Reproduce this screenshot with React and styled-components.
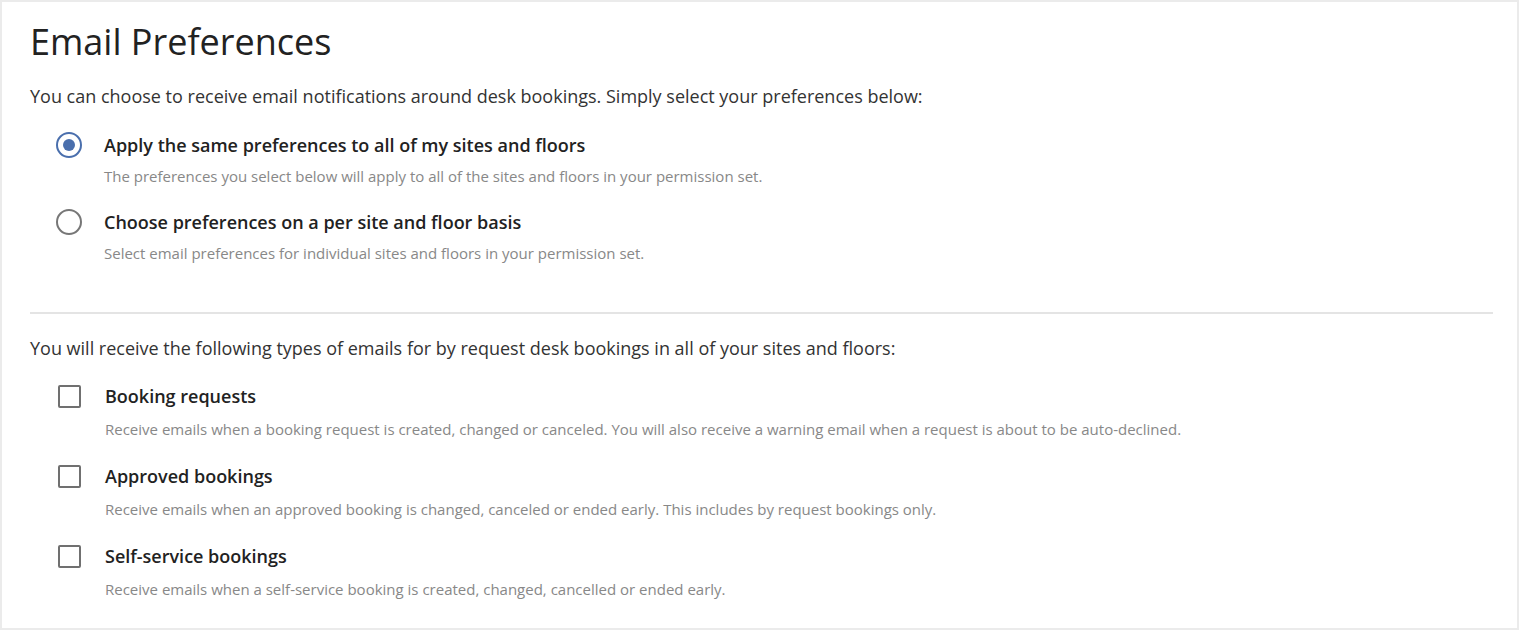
import React from "react";
import styled, { createGlobalStyle } from "styled-components";

const Global = createGlobalStyle`
  html, body { margin: 0; padding: 0; background: #ffffff; }
  body { font-family: "Open Sans", "Noto Sans", sans-serif; }
  * { box-sizing: border-box; }
`;

const Frame = styled.div`
  width: 1519px;
  height: 630px;
  border: 2px solid #ebebeb;
  background: #ffffff;
  padding: 15px 24px 0 28px;
  overflow: hidden;
`;

const Title = styled.h1`
  margin: 0;
  font-size: 36px;
  font-weight: 400;
  line-height: 50px;
  color: #222222;
`;

const Intro = styled.p`
  margin: ${(p) => p.$top || 0}px 0 0;
  font-size: 18px;
  line-height: 24px;
  color: #333333;
`;

const OptionList = styled.div`
  display: flex;
  flex-direction: column;
  gap: ${(p) => p.$gap}px;
  margin-top: ${(p) => p.$top}px;
`;

const Option = styled.label`
  display: grid;
  grid-template-columns: ${(p) => p.$col}px 1fr;
  grid-template-rows: auto auto;
  row-gap: ${(p) => p.$rowGap}px;
  align-items: center;
  cursor: pointer;
`;

const Radio = styled.span`
  width: 26px;
  height: 26px;
  border-radius: 50%;
  border: 2.5px solid ${(p) => (p.$checked ? "#4a6fad" : "#777777")};
  display: flex;
  align-items: center;
  justify-content: center;
  margin-left: 26px;
  &::after {
    content: "";
    width: 12px;
    height: 12px;
    border-radius: 50%;
    background: #4a6fad;
    display: ${(p) => (p.$checked ? "block" : "none")};
  }
`;

const Checkbox = styled.span`
  width: 23px;
  height: 23px;
  border-radius: 2px;
  border: 2.5px solid #707070;
  margin-left: 28px;
`;

const Label = styled.span`
  font-size: 18px;
  font-weight: 600;
  line-height: 24px;
  color: #222222;
`;

const Desc = styled.span`
  grid-column: 2;
  font-size: 15px;
  line-height: 20px;
  color: #888888;
`;

const Divider = styled.hr`
  border: 0;
  height: 2px;
  background: #e4e4e4;
  margin: 49px 0 0;
`;

const radios = [
  {
    label: "Apply the same preferences to all of my sites and floors",
    desc: "The preferences you select below will apply to all of the sites and floors in your permission set.",
    checked: true,
  },
  {
    label: "Choose preferences on a per site and floor basis",
    desc: "Select email preferences for individual sites and floors in your permission set.",
    checked: false,
  },
];

const checks = [
  {
    label: "Booking requests",
    desc: "Receive emails when a booking request is created, changed or canceled. You will also receive a warning email when a request is about to be auto-declined.",
  },
  {
    label: "Approved bookings",
    desc: "Receive emails when an approved booking is changed, canceled or ended early. This includes by request bookings only.",
  },
  {
    label: "Self-service bookings",
    desc: "Receive emails when a self-service booking is created, changed, cancelled or ended early.",
  },
];

export default function App() {
  return (
    <>
      <Global />
      <Frame>
        <Title>Email Preferences</Title>
        <Intro $top={17}>
          You can choose to receive email notifications around desk bookings. Simply select your preferences below:
        </Intro>
        <OptionList $gap={23} $top={24}>
          {radios.map((r) => (
            <Option key={r.label} $col={74} $rowGap={8}>
              <Radio $checked={r.checked} />
              <Label>{r.label}</Label>
              <Desc>{r.desc}</Desc>
            </Option>
          ))}
        </OptionList>
        <Divider />
        <Intro $top={22}>
          You will receive the following types of emails for by request desk bookings in all of your sites and floors:
        </Intro>
        <OptionList $gap={25} $top={24}>
          {checks.map((c) => (
            <Option key={c.label} $col={75} $rowGap={11}>
              <Checkbox />
              <Label>{c.label}</Label>
              <Desc>{c.desc}</Desc>
            </Option>
          ))}
        </OptionList>
      </Frame>
    </>
  );
}
